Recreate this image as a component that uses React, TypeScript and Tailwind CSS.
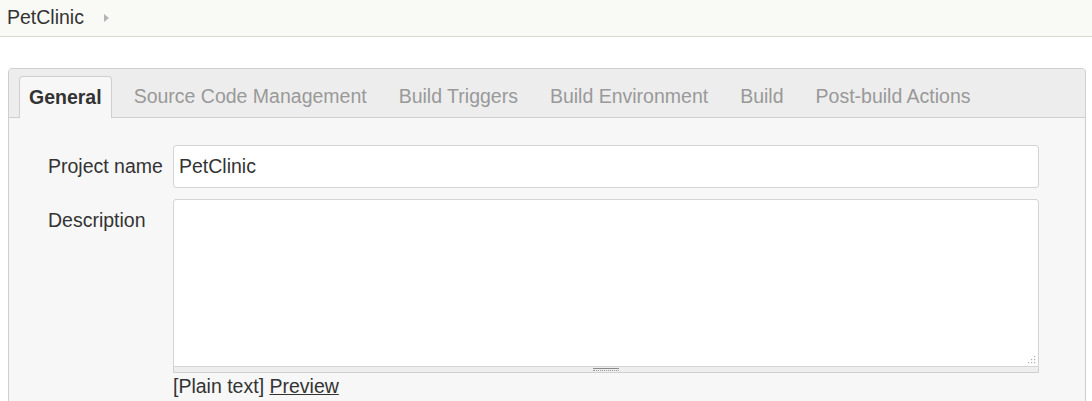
import React from 'react';

const tabs = ['Source Code Management', 'Build Triggers', 'Build Environment', 'Build', 'Post-build Actions'];

export default function App() {
    return (
        <div className="min-h-[401px] bg-white font-['Liberation_Sans',Arial,sans-serif] text-[19.5px] text-[#333] overflow-hidden">
            {/* breadcrumb bar */}
            <div className="h-[37px] bg-[#f9f9f6] border-b border-[#d8d8cf] flex items-center pl-[7px]">
                <span className="leading-none -mt-[1px]">PetClinic</span>
                <svg width="5" height="8" viewBox="0 0 5 8" className="ml-[20px] -mt-[1px]">
                    <path d="M0 0 L5 4 L0 8 Z" fill="#b4b4b4" />
                </svg>
            </div>

            <div className="pt-[31px] pl-[8px]">
                <div className="w-[1078px] h-[340px] border border-[#cfcfcf] rounded-t-[4px] bg-[#f7f7f7]">
                    {/* tab bar */}
                    <div className="h-[49px] bg-[#ededed] border-b border-[#cfcfcf] rounded-t-[4px] flex items-end pl-[10px] gap-[12px]">
                        <div className="h-[42px] -mb-[1px] px-[9px] pt-[1px] flex items-center bg-[#f7f7f7] border border-b-0 border-[#cfcfcf] rounded-t-[4px] font-bold text-[#333]">
                            General
                        </div>
                        {tabs.map((t) => (
                            <div key={t} className="h-[41px] px-[10px] pt-[1px] flex items-center text-[#999]">
                                {t}
                            </div>
                        ))}
                    </div>

                    {/* form */}
                    <div className="pt-[27px]">
                        <div className="flex items-center">
                            <div className="w-[164px] pl-[39px]">Project name</div>
                            <div className="w-[866px] h-[43px] border border-[#d4d4d4] rounded-[3px] bg-white flex items-center pl-[5px]">
                                PetClinic
                            </div>
                        </div>

                        <div className="flex mt-[11px]">
                            <div className="w-[164px] pl-[39px] pt-[7px]">Description</div>
                            <div className="w-[866px]">
                                <div className="relative h-[168px] border border-[#d4d4d4] rounded-t-[3px] bg-white">
                                    <svg width="8" height="8" viewBox="0 0 8 8" className="absolute right-[2px] bottom-[2px]">
                                        <g fill="#aaa">
                                            <rect x="6" y="0" width="1.2" height="1.2" />
                                            <rect x="3" y="3" width="1.2" height="1.2" />
                                            <rect x="6" y="3" width="1.2" height="1.2" />
                                            <rect x="0" y="6" width="1.2" height="1.2" />
                                            <rect x="3" y="6" width="1.2" height="1.2" />
                                            <rect x="6" y="6" width="1.2" height="1.2" />
                                        </g>
                                    </svg>
                                </div>
                                <div className="h-[6px] bg-[#eeeeee] border-x border-b border-[#d0d0d0] flex justify-center">
                                    <div className="w-[26px] mt-[1px]">
                                        <div className="h-px bg-[#8a8a8a]" />
                                        <div className="h-px mt-px border-t border-dotted border-[#9a9a9a]" />
                                    </div>
                                </div>
                                <div className="mt-[2px] leading-[22px]">
                                    [Plain text] <span className="underline">Preview</span>
                                </div>
                            </div>
                        </div>
                    </div>
                </div>
            </div>
        </div>
    );
}
